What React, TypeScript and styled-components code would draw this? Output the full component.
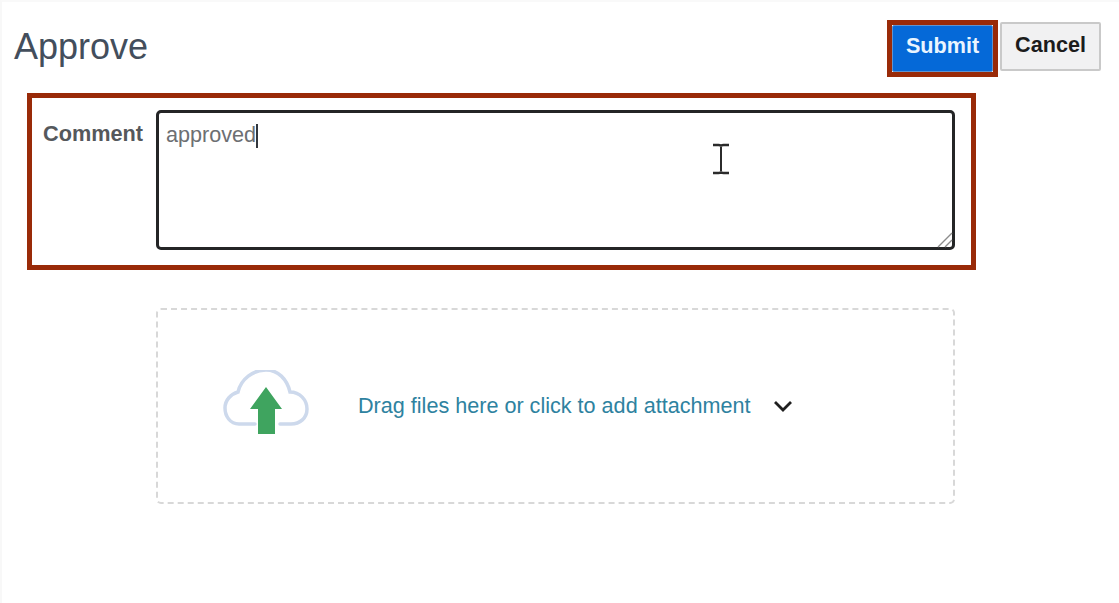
import React from "react";
import styled, { createGlobalStyle } from "styled-components";

const Global = createGlobalStyle`
  html, body { margin: 0; padding: 0; background: #fff; }
  body { font-family: "Liberation Sans", Arial, sans-serif; }
`;

const Page = styled.div`
  position: relative;
  width: 1119px;
  height: 603px;
  overflow: hidden;
  background: #fff;
  border-left: 2px solid #f8f8f8;
  border-top: 2px solid #f9f9f9;
  box-sizing: border-box;
`;

const Header = styled.header`
  display: flex;
  align-items: flex-start;
  justify-content: space-between;
  height: 91px;
  padding: 18px 18px 0 12px;
  box-sizing: border-box;
`;

const Title = styled.h1`
  margin: 6px 0 0;
  font-size: 36px;
  line-height: 42px;
  font-weight: 400;
  color: #434e5c;
`;

const Actions = styled.div`
  display: flex;
  align-items: flex-start;
  gap: 2px;
`;

const Highlight = styled.div`
  border: 5px solid #992a08;
  box-sizing: border-box;
`;

const Button = styled.button<{ $primary?: boolean }>`
  display: block;
  width: 101px;
  height: ${(p) => (p.$primary ? "47px" : "49px")};
  margin: ${(p) => (p.$primary ? "0" : "2px 0 0")};
  padding: 0 0 ${(p) => (p.$primary ? "5px" : "4px")};
  box-sizing: border-box;
  font-family: inherit;
  font-size: 21.6px;
  font-weight: 700;
  border-radius: 2px;
  color: ${(p) => (p.$primary ? "#eaf5ff" : "#1c1c1c")};
  background: ${(p) => (p.$primary ? "#0569d8" : "#f1f1f2")};
  border: ${(p) => (p.$primary ? "1px solid #5f93cf" : "2px solid #c9c9c9")};
`;

const CommentBox = styled(Highlight)`
  display: flex;
  align-items: flex-start;
  width: 949px;
  height: 177px;
  margin-left: 25px;
  padding: 12px 16px 0 11px;
`;

const Label = styled.label`
  width: 113px;
  flex: none;
  padding-top: 11px;
  font-size: 21.7px;
  line-height: 25px;
  font-weight: 700;
  color: #55585c;
`;

const Field = styled.div`
  position: relative;
  width: 799px;
  height: 140px;
  box-sizing: border-box;
  border: 3px solid #242526;
  border-radius: 5px;
  padding: 9px 7px;
  font-size: 21.6px;
  line-height: 25px;
  color: #6d6f72;
`;

const Caret = styled.span`
  display: inline-block;
  width: 2px;
  height: 24px;
  vertical-align: -6px;
  background: #33373d;
`;

const Grip = styled.svg`
  position: absolute;
  right: -1px;
  bottom: -1px;
`;

const IBeam = styled.svg`
  position: absolute;
  left: 553px;
  top: 30px;
`;

const DropZone = styled.div`
  display: flex;
  align-items: center;
  width: 799px;
  height: 196px;
  margin: 38px 0 0 154px;
  padding: 0 0 0 64px;
  box-sizing: border-box;
  border: 2px dashed #d8d8d8;
  border-radius: 5px;
`;

const CloudIcon = styled.svg`
  flex: none;
`;

const DropText = styled.span`
  margin-left: 48px;
  font-size: 21.6px;
  line-height: 26px;
  color: #2e82a0;
  white-space: nowrap;
`;

const Chevron = styled.svg`
  margin-left: 23px;
  flex: none;
`;

export default function App() {
  return (
    <Page>
      <Global />
      <Header>
        <Title>Approve</Title>
        <Actions>
          <Highlight>
            <Button $primary>Submit</Button>
          </Highlight>
          <Button>Cancel</Button>
        </Actions>
      </Header>
      <CommentBox>
        <Label>Comment</Label>
        <Field>
          approved
          <Caret />
          <IBeam width="18" height="32" viewBox="0 0 18 32" fill="none" stroke="#2b2b2b">
            <path d="M1 2h5.500c1.200 0 2.500.6 2.500 1.500C9 2.600 10.300 2 11.500 2H17" strokeWidth="2.500" />
            <path d="M1 30h5.500c1.200 0 2.500-.6 2.500-1.500 0 .9 1.300 1.500 2.500 1.500H17" strokeWidth="2.500" />
            <path d="M9 3.500v25" strokeWidth="2" />
          </IBeam>
          <Grip width="17" height="17" viewBox="0 0 17 17" fill="none" stroke="#8c8c8c" strokeWidth="1.400">
            <path d="M2 16L16 2M9 16l7-7" />
          </Grip>
        </Field>
      </CommentBox>
      <DropZone>
        <CloudIcon width="88" height="72" viewBox="0 2 88 72">
          <path
            d="M33 56H17C8 56 3 48 3 40c0-8 6-14 13-16C19 11 31 2 44 2c12 0 21 9 24 22 10 0 17 8 17 17 0 9-7 15-16 15H58"
            fill="none"
            stroke="#cdd9ec"
            strokeWidth="3.500"
            strokeLinecap="round"
          />
          <path d="M44 19L60 41H53V66H36V41H28Z" fill="#3fa45f" />
        </CloudIcon>
        <DropText>Drag files here or click to add attachment</DropText>
        <Chevron width="20" height="14" viewBox="0 0 20 14" fill="none" stroke="#1f1f1f" strokeWidth="2.800">
          <path d="M2 3l8 8 8-8" />
        </Chevron>
      </DropZone>
    </Page>
  );
}
